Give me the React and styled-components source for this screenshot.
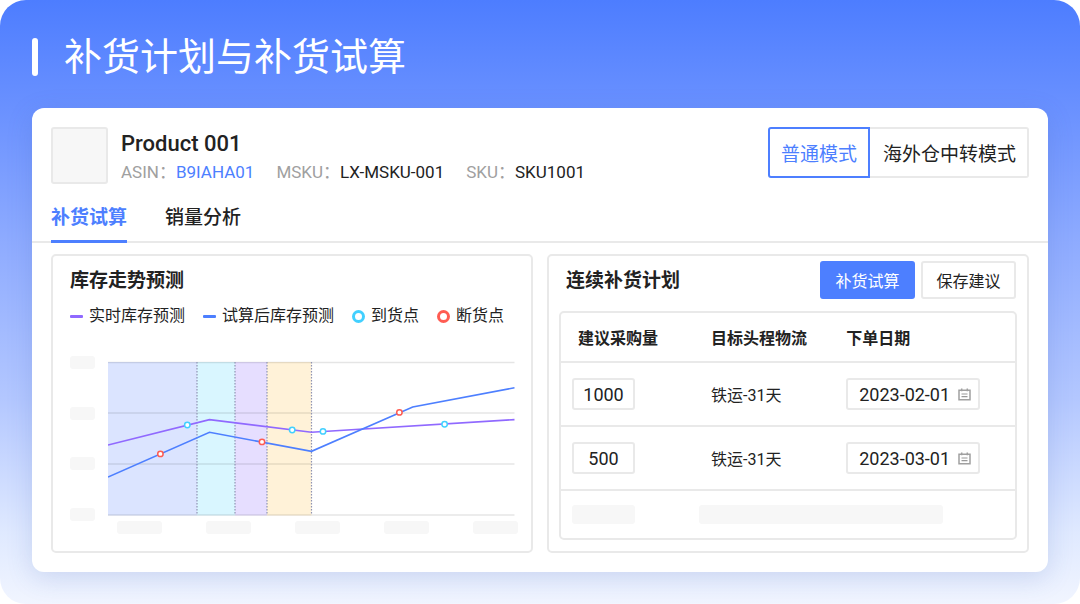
import React from 'react'
import styled, { createGlobalStyle } from 'styled-components'

const plans = [
  { id: 1, quantity: '1000', logistics: '铁运-31天', date: '2023-02-01' },
  { id: 2, quantity: '500', logistics: '铁运-31天', date: '2023-03-01' },
]

const bands = [
  { x: 0, width: 89, color: '#dbe4ff' },
  { x: 89, width: 38, color: '#d9f6ff' },
  { x: 127, width: 32, color: '#e6deff' },
  { x: 159, width: 44.5, color: '#fff2d8' },
]

const gridLines = [1.5, 52, 103, 154]

const arrivals = [
  [79.3, 64],
  [184.2, 69],
  [215, 70.4],
  [336.6, 63.3],
]

const stockouts = [
  [52.4, 92.9],
  [154, 80.9],
  [291.4, 51.4],
]

const CalendarIcon = () => (
  <svg width="13" height="13" viewBox="0 0 13 13" fill="none" aria-hidden="true">
    <path d="M1 2.3h11v9.4H1zM3.7.6v2.6M9.3.6v2.6" stroke="#a0a0a0" strokeWidth="1.5" />
    <path d="M3.5 6h6M3.5 8.6h6" stroke="#999" strokeWidth="1.2" />
  </svg>
)

const TrendChart = () => (
  <Plot viewBox="0 0 410 155" role="img" aria-label="库存走势预测">
    {bands.map(band => (
      <rect
        key={band.x}
        x={band.x}
        y="1"
        width={band.width}
        height="153.5"
        fill={band.color}
      />
    ))}
    {gridLines.map(y => (
      <path key={y} d={`M0 ${y}H406.5`} stroke="#000" strokeOpacity=".1" strokeWidth="1.5" />
    ))}
    {bands.map(band => (
      <path
        key={band.x}
        d={`M${band.x + band.width} 1V154`}
        stroke="#8f94b3"
        strokeWidth="1.2"
        strokeDasharray="1.5 1.5"
      />
    ))}
    <path
      d="M0 84 101.5 58.6 203.5 71.2 406.5 58.6"
      fill="none"
      stroke="#9069ff"
      strokeWidth="1.6"
    />
    <path
      d="M0 116 101.5 71.3 203.5 90.3 304.7 46 406.5 26.8"
      fill="none"
      stroke="#4d7fff"
      strokeWidth="1.6"
    />
    {arrivals.map(([cx, cy]) => (
      <circle key={cx} cx={cx} cy={cy} r="2.7" fill="#fff" stroke="#42d0ff" strokeWidth="1.5" />
    ))}
    {stockouts.map(([cx, cy]) => (
      <circle key={cx} cx={cx} cy={cy} r="2.7" fill="#fff" stroke="#ff5c52" strokeWidth="1.5" />
    ))}
  </Plot>
)

const App = () => (
  <Page>
    <GlobalStyle />
    <PageTitle>补货计划与补货试算</PageTitle>

    <Card>
      <ProductHeader>
        <Thumbnail />
        <ProductInfo>
          <ProductName>Product 001</ProductName>
          <Codes>
            <Code>
              <dt>ASIN：</dt>
              <dd>
                <CodeLink href="#asin">B9IAHA01</CodeLink>
              </dd>
            </Code>
            <Code>
              <dt>MSKU：</dt>
              <dd>LX-MSKU-001</dd>
            </Code>
            <Code>
              <dt>SKU：</dt>
              <dd>SKU1001</dd>
            </Code>
          </Codes>
        </ProductInfo>
        <ModeSwitch>
          <ModeButton type="button" $active>
            普通模式
          </ModeButton>
          <ModeButton type="button">海外仓中转模式</ModeButton>
        </ModeSwitch>
      </ProductHeader>

      <Tabs>
        <Tab type="button" $active>
          补货试算
        </Tab>
        <Tab type="button">销量分析</Tab>
      </Tabs>

      <Panels>
        <TrendPanel>
          <PanelTitle>库存走势预测</PanelTitle>
          <Legend>
            <li>
              <Dash $color="#9069ff" />
              实时库存预测
            </li>
            <li>
              <Dash $color="#4d7fff" />
              试算后库存预测
            </li>
            <li>
              <Ring $color="#42d0ff" />
              到货点
            </li>
            <li>
              <Ring $color="#ff5c52" />
              断货点
            </li>
          </Legend>
          <ChartGrid>
            <YAxis>
              <AxisBlank $width={25} />
              <AxisBlank $width={25} />
              <AxisBlank $width={25} />
              <AxisBlank $width={25} />
            </YAxis>
            <TrendChart />
            <XAxis>
              <AxisBlank $width={45} />
              <AxisBlank $width={45} />
              <AxisBlank $width={45} />
              <AxisBlank $width={45} />
              <AxisBlank $width={45} />
            </XAxis>
          </ChartGrid>
        </TrendPanel>

        <PlanPanel>
          <PlanHeader>
            <PanelTitle>连续补货计划</PanelTitle>
            <Actions>
              <ActionButton type="button" $primary>
                补货试算
              </ActionButton>
              <ActionButton type="button">保存建议</ActionButton>
            </Actions>
          </PlanHeader>
          <TableFrame>
            <PlanTable>
              <thead>
                <tr>
                  <th>建议采购量</th>
                  <th>目标头程物流</th>
                  <th>下单日期</th>
                </tr>
              </thead>
              <tbody>
                {plans.map(plan => (
                  <tr key={plan.id}>
                    <td>
                      <QuantityInput
                        type="text"
                        aria-label="建议采购量"
                        defaultValue={plan.quantity}
                      />
                    </td>
                    <td>{plan.logistics}</td>
                    <td>
                      <DateField>
                        <input type="text" aria-label="下单日期" defaultValue={plan.date} />
                        <CalendarIcon />
                      </DateField>
                    </td>
                  </tr>
                ))}
                <BlankRow>
                  <td>
                    <RowBlank $width={63} />
                  </td>
                  <td colSpan={2}>
                    <RowBlank $width={244} />
                  </td>
                </BlankRow>
              </tbody>
            </PlanTable>
          </TableFrame>
        </PlanPanel>
      </Panels>
    </Card>
  </Page>
)

export default App

const GlobalStyle = createGlobalStyle`
  * {
    box-sizing: border-box;
  }
  body {
    margin: 0;
    background: #fff;
    color: #222;
    font-family: Roboto, 'Noto Sans CJK SC', sans-serif;
  }
  button,
  input {
    color: inherit;
    font-family: inherit;
  }
  h1,
  h2,
  ul,
  dl,
  dd {
    margin: 0;
    padding: 0;
  }
`

const Page = styled.main`
  min-height: 100vh;
  padding: 32px;
  border-radius: 26px;
  background: linear-gradient(
    180deg,
    #4d7dff 0%,
    #6a91ff 18%,
    #8eabff 40%,
    #b3c7ff 66%,
    #dfe9ff 88%,
    #f1f5ff 100%
  );
`

const PageTitle = styled.h1`
  display: flex;
  align-items: center;
  gap: 26px;
  height: 50px;
  margin-bottom: 26px;
  color: #fff;
  font-size: 38px;
  font-weight: 400;
  line-height: 50px;

  &::before {
    content: '';
    width: 6px;
    height: 38px;
    border-radius: 3px;
    background: #fff;
  }
`

const Card = styled.section`
  padding-bottom: 19px;
  border-radius: 12px;
  background: #fff;
  box-shadow: 0 6px 26px rgba(60, 95, 180, 0.18);
`

const ProductHeader = styled.header`
  display: flex;
  align-items: flex-start;
  padding: 19px 19px 0;
`

const Thumbnail = styled.div`
  width: 57px;
  height: 57px;
  margin-right: 13px;
  border: 2px solid #e9e9e9;
  border-radius: 3px;
  background: #f7f7f7;
`

const ProductInfo = styled.div`
  flex: 1;
`

const ProductName = styled.h2`
  font-size: 22px;
  font-weight: 500;
  line-height: 34px;
`

const Codes = styled.dl`
  display: flex;
  gap: 22px;
`

const Code = styled.div`
  display: flex;
  font-size: 17px;
  line-height: 22px;

  dt {
    color: #a0a0a0;
  }
`

const CodeLink = styled.a`
  color: #4d7fff;
  text-decoration: none;
`

const ModeSwitch = styled.div`
  display: flex;
`

const ModeButton = styled.button`
  height: 51px;
  padding: ${props => (props.$active ? '0 11px' : '0 11px 0 13px')};
  border: 2px solid ${props => (props.$active ? '#4d7fff' : '#e9e9e9')};
  border-left-width: ${props => (props.$active ? '2px' : '0')};
  border-radius: ${props => (props.$active ? '3px 0 0 3px' : '0 3px 3px 0')};
  background: #fff;
  color: ${props => (props.$active ? '#4d7fff' : '#222')};
  font-size: 19px;
`

const Tabs = styled.nav`
  display: flex;
  gap: 38px;
  height: 59px;
  padding: 0 19px;
  box-shadow: inset 0 -2px #e9e9e9;
`

const Tab = styled.button`
  padding: 6px 0 0;
  border: 0;
  border-bottom: 3px solid ${props => (props.$active ? '#4d7fff' : 'transparent')};
  background: none;
  color: ${props => (props.$active ? '#4d7fff' : '#222')};
  font-size: 19px;
  font-weight: ${props => (props.$active ? 700 : 500)};
`

const Panels = styled.div`
  display: grid;
  grid-template-columns: 1fr 1fr;
  gap: 14px;
  padding: 11px 19px 0;
`

const Panel = styled.section`
  border: 2px solid #e9e9e9;
  border-radius: 5px;
`

const TrendPanel = styled(Panel)`
  padding: 5px 13px 17px 17px;
`

const PlanPanel = styled(Panel)`
  padding: 5px 10px 11px;
`

const PanelTitle = styled.h2`
  font-size: 19px;
  font-weight: 700;
  line-height: 40px;
`

const Legend = styled.ul`
  display: flex;
  gap: 18px;
  margin-top: 3px;
  font-size: 16px;
  line-height: 24px;
  list-style: none;

  li {
    display: flex;
    align-items: center;
    gap: 6px;
    white-space: nowrap;
  }
`

const Dash = styled.span`
  width: 13px;
  height: 3px;
  border-radius: 1px;
  background: ${props => props.$color};
`

const Ring = styled.span`
  width: 13px;
  height: 13px;
  border: 3px solid ${props => props.$color};
  border-radius: 50%;
`

const ChartGrid = styled.div`
  display: grid;
  grid-template-columns: 25px 1fr;
  column-gap: 13px;
  margin-top: 27px;
`

const YAxis = styled.div`
  display: flex;
  flex-direction: column;
  justify-content: space-between;
  margin: 1px 0 -5px;
`

const Plot = styled.svg`
  display: block;
  width: 100%;
  margin-top: 6px;
`

const XAxis = styled.div`
  display: flex;
  grid-column: 2;
  justify-content: space-between;
  padding: 5px 0 0 9px;
`

const AxisBlank = styled.div`
  width: ${props => props.$width}px;
  height: 13px;
  border-radius: 3px;
  background: #f7f7f7;
`

const PlanHeader = styled.div`
  display: flex;
  align-items: flex-start;
  justify-content: space-between;
  padding: 0 1px 0 7px;
`

const Actions = styled.div`
  display: flex;
  gap: 6px;
`

const ActionButton = styled.button`
  width: 95px;
  height: 38px;
  padding: 0;
  border: 2px solid ${props => (props.$primary ? '#4d7fff' : '#e9e9e9')};
  border-radius: 3px;
  background: ${props => (props.$primary ? '#4d7fff' : '#fff')};
  color: ${props => (props.$primary ? '#fff' : '#222')};
  font-size: 16px;
`

const TableFrame = styled.div`
  margin-top: 10px;
  border: 2px solid #e9e9e9;
  border-radius: 5px;
`

const PlanTable = styled.table`
  width: 100%;
  border-spacing: 0;
  table-layout: fixed;
  font-size: 16px;
  text-align: left;

  th,
  td {
    padding: 0 11px;
  }

  th {
    height: 48px;
    font-weight: 700;
  }

  th:first-child {
    width: 138px;
    padding-left: 17px;
  }

  th:nth-child(2) {
    width: 30%;
  }

  td {
    height: 64px;
    border-top: 2px solid #e9e9e9;
  }

  th:nth-child(2),
  td:nth-child(2) {
    padding-left: 12px;
  }
`

const BlankRow = styled.tr`
  && td {
    height: 49px;
  }

  && td + td {
    padding-left: 0;
  }
`

const QuantityInput = styled.input`
  display: block;
  width: 63px;
  height: 32px;
  padding: 0;
  border: 2px solid #e9e9e9;
  border-radius: 3px;
  font-size: 18px;
  text-align: center;
`

const DateField = styled.div`
  display: flex;
  align-items: center;
  width: 134px;
  height: 32px;
  padding: 0 7px 0 11px;
  border: 2px solid #e9e9e9;
  border-radius: 3px;

  input {
    flex: 1;
    min-width: 0;
    padding: 0;
    border: 0;
    outline: 0;
    background: none;
    font-size: 18px;
  }
`

const RowBlank = styled.div`
  width: ${props => props.$width}px;
  height: 19px;
  border-radius: 3px;
  background: #f7f7f7;
`
